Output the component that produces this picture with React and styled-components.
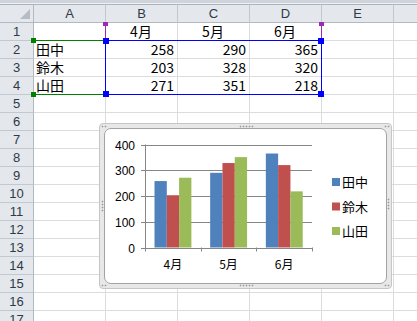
import React from "react";
import styled, { createGlobalStyle, css } from "styled-components";

const GlobalStyle = createGlobalStyle`
  html, body {
    margin: 0;
    padding: 0;
    background: #fff;
    overflow: hidden;
  }
`;

const COLS = ["A", "B", "C", "D", "E", ""];
const ROWS = [
  ["", "4月", "5月", "6月"],
  ["田中", 258, 290, 365],
  ["鈴木", 203, 328, 320],
  ["山田", 271, 351, 218],
];
const SERIES = [
  { name: "田中", color: "#4f81bd" },
  { name: "鈴木", color: "#c0504d" },
  { name: "山田", color: "#9bbb59" },
];
const MONTHS = ["4月", "5月", "6月"];

const Sheet = styled.div`
  position: relative;
  width: 417px;
  height: 321px;
  overflow: hidden;
  background: #fff;
`;

const TopStrip = styled.div`
  height: 5px;
  background: linear-gradient(#cfd4db 0, #cfd4db 3px, #eef1f5 3px, #eef1f5 4px, #aab3be 4px);
`;

const Grid = styled.div`
  display: grid;
  grid-template-columns: 34px repeat(6, 72px);
  grid-auto-rows: 18px;
`;

const Head = styled.div`
  box-sizing: border-box;
  display: flex;
  align-items: center;
  justify-content: center;
  background: #e4e7ec;
  border-right: 1px solid ${(p) => (p.$corner ? "#b3b9c1" : "#c2c8d0")};
  border-bottom: 1px solid #b3b9c1;
  font-family: "Liberation Sans", Arial, sans-serif;
  font-size: 13px;
  color: #2e3a48;
  position: relative;
  grid-row: ${(p) => p.$row};
  grid-column: ${(p) => p.$col};
`;

const RowHead = styled(Head)`
  border-right: 1px solid #b3b9c1;
  border-bottom: 1px solid #c2c8d0;
`;

const Corner = styled.div`
  position: absolute;
  right: 3px;
  bottom: 3px;
  width: 0;
  height: 0;
  border-left: 10px solid transparent;
  border-bottom: 10px solid #b6bcc4;
`;

const Cell = styled.div`
  box-sizing: border-box;
  grid-row: ${(p) => p.$row};
  grid-column: ${(p) => p.$col};
  border-right: 1px solid #dadcdd;
  border-bottom: 1px solid #dadcdd;
  display: flex;
  align-items: flex-end;
  justify-content: ${(p) => p.$align};
  padding: 0 3px 0 2px;
  font-family: "Noto Sans CJK JP", sans-serif;
  font-size: 14px;
  line-height: 17px;
  color: #000;
  white-space: nowrap;
`;

/* a selected range, laid onto the same grid tracks as the cells it covers */
const Range = styled.div`
  grid-column: ${(p) => p.$cols};
  grid-row: ${(p) => p.$rows};
  position: relative;
  margin: -1px 0 0 ${(p) => (p.$sides.includes("l") ? -1 : 0)}px;
  pointer-events: none;
  ${(p) => p.$sides.includes("t") && css`border-top: 1px solid ${p.$color};`}
  ${(p) => p.$sides.includes("b") && css`border-bottom: 1px solid ${p.$color};`}
  ${(p) => p.$sides.includes("l") && css`border-left: 1px solid ${p.$color};`}
  ${(p) => p.$sides.includes("r") && css`border-right: 1px solid ${p.$color};`}
`;

const HANDLE_AT = {
  tl: "left: -3px; top: -3px;",
  tr: "right: -3px; top: -3px;",
  bl: "left: -3px; bottom: -3px;",
  br: "right: -3px; bottom: -3px;",
  tlFlat: "left: -3px; top: 0;",
  trFlat: "right: -3px; top: 0;",
};

const Handle = styled.span`
  position: absolute;
  width: ${(p) => p.$w || 6}px;
  height: ${(p) => p.$h || 6}px;
  background: ${(p) => p.$color};
  ${(p) => HANDLE_AT[p.$at]}
`;

const Frame = styled.div`
  position: absolute;
  left: 99px;
  top: 123px;
  width: 293px;
  height: 166px;
  box-sizing: border-box;
  border: 1px solid #c6c6c6;
  border-radius: 4px;
  background: #e8e8e8;
  padding: 4px;
`;

const Inner = styled.div`
  height: 100%;
  box-sizing: border-box;
  border: 1px solid #a3a3a3;
  border-radius: 7px;
  background: #fff;
  overflow: hidden;
  display: flex;
`;

const GRIP_AT = {
  tl: "left: 1px; top: 1px; width: 6px; height: 3px;",
  t: "left: 139px; top: 1px; width: 15px; height: 3px;",
  tr: "right: 1px; top: 1px; width: 6px; height: 3px;",
  l: "left: 1px; top: 76px; width: 3px; height: 12px;",
  r: "right: 1px; top: 74px; width: 3px; height: 12px;",
  bl: "left: 1px; bottom: 1px; width: 6px; height: 3px;",
  b: "left: 139px; bottom: 1px; width: 15px; height: 3px;",
  br: "right: 1px; bottom: 1px; width: 6px; height: 3px;",
};

const Grip = styled.span`
  position: absolute;
  background-image: radial-gradient(circle, #9c9c9c 0.8px, transparent 1.1px);
  background-size: 3px 3px;
  ${(p) => GRIP_AT[p.$at]}
`;

const Axis = styled.text`
  font-family: "Liberation Sans", Arial, sans-serif;
  font-size: 12px;
  fill: #000;
`;

const Label = styled.text`
  font-family: "Noto Sans CJK JP", sans-serif;
  font-size: ${(p) => p.$size}px;
  fill: #000;
`;

function Chart() {
  const base = 247.5;
  const top = 144.5;
  const per = (base - top) / 400;
  const left = 145;
  const right = 312;
  const cat = (right - left) / 3;
  return (
    <svg width="281" height="154" viewBox="105 129 281 154">
      {[0, 100, 200, 300, 400].map((v) => {
        const y = Math.round(base - v * per) + 0.5;
        return (
          <g key={v}>
            <line x1={141} x2={right} y1={y} y2={y} stroke="#868686" />
            <Axis x={135} y={y + 4} textAnchor="end">
              {v}
            </Axis>
          </g>
        );
      })}
      <line x1={left + 0.5} x2={left + 0.5} y1={top} y2={base + 0.5} stroke="#868686" />
      {[0, 1, 2, 3].map((i) => {
        const x = Math.round(left + i * cat) + 0.5;
        return <line key={i} x1={x} x2={x} y1={base} y2={base + 4} stroke="#868686" />;
      })}
      {MONTHS.map((m, i) => {
        const x0 = left + i * cat + 9.5;
        return (
          <g key={m}>
            {SERIES.map((s, j) => {
              const v = ROWS[j + 1][i + 1];
              const h = v * per;
              return (
                <rect key={s.name} x={x0 + j * 12.3} y={base - h} width={12.3} height={h} fill={s.color} />
              );
            })}
            <Label $size={12} x={left + i * cat + cat / 2} y={269} textAnchor="middle">
              {m}
            </Label>
          </g>
        );
      })}
      {SERIES.map((s, j) => {
        const y = 178 + j * 24.5;
        return (
          <g key={s.name}>
            <rect x={332} y={y} width={8} height={8} fill={s.color} />
            <Label $size={13} x={342} y={y + 9}>
              {s.name}
            </Label>
          </g>
        );
      })}
    </svg>
  );
}

export default function App() {
  return (
    <Sheet>
      <GlobalStyle />
      <TopStrip />
      <Grid>
        <Head $corner $row={1} $col={1}>
          <Corner />
        </Head>
        {COLS.map((c, i) => (
          <Head key={i} $row={1} $col={i + 2}>
            {c}
          </Head>
        ))}
        {Array.from({ length: 17 }, (_, r) => (
          <React.Fragment key={r}>
            <RowHead $row={r + 2} $col={1}>
              {r + 1}
            </RowHead>
            {COLS.map((_, c) => {
              const v = ROWS[r] ? ROWS[r][c] : undefined;
              const align = r === 0 ? "center" : typeof v === "number" ? "flex-end" : "flex-start";
              return (
                <Cell key={c} $row={r + 2} $col={c + 2} $align={align}>
                  {v}
                </Cell>
              );
            })}
          </React.Fragment>
        ))}

        <Range $cols="2 / 3" $rows="3 / 6" $sides="tb" $color="#008000">
          <Handle $color="#008000" $w={5} $h={5} $at="tl" />
          <Handle $color="#008000" $w={5} $h={5} $at="tr" />
          <Handle $color="#008000" $w={5} $h={5} $at="bl" />
          <Handle $color="#008000" $w={5} $h={5} $at="br" />
        </Range>
        <Range $cols="3 / 6" $rows="2 / 3" $sides="lr" $color="#9a2ab8">
          <Handle $color="#9a2ab8" $w={5} $h={4} $at="tlFlat" />
          <Handle $color="#9a2ab8" $w={5} $h={4} $at="trFlat" />
        </Range>
        <Range $cols="3 / 6" $rows="3 / 6" $sides="tblr" $color="#0000ff">
          <Handle $color="#0000ff" $at="tl" />
          <Handle $color="#0000ff" $at="tr" />
          <Handle $color="#0000ff" $at="bl" />
          <Handle $color="#0000ff" $at="br" />
        </Range>
      </Grid>

      <Frame>
        <Inner>
          <Chart />
        </Inner>
        {Object.keys(GRIP_AT).map((k) => (
          <Grip key={k} $at={k} />
        ))}
      </Frame>
    </Sheet>
  );
}
